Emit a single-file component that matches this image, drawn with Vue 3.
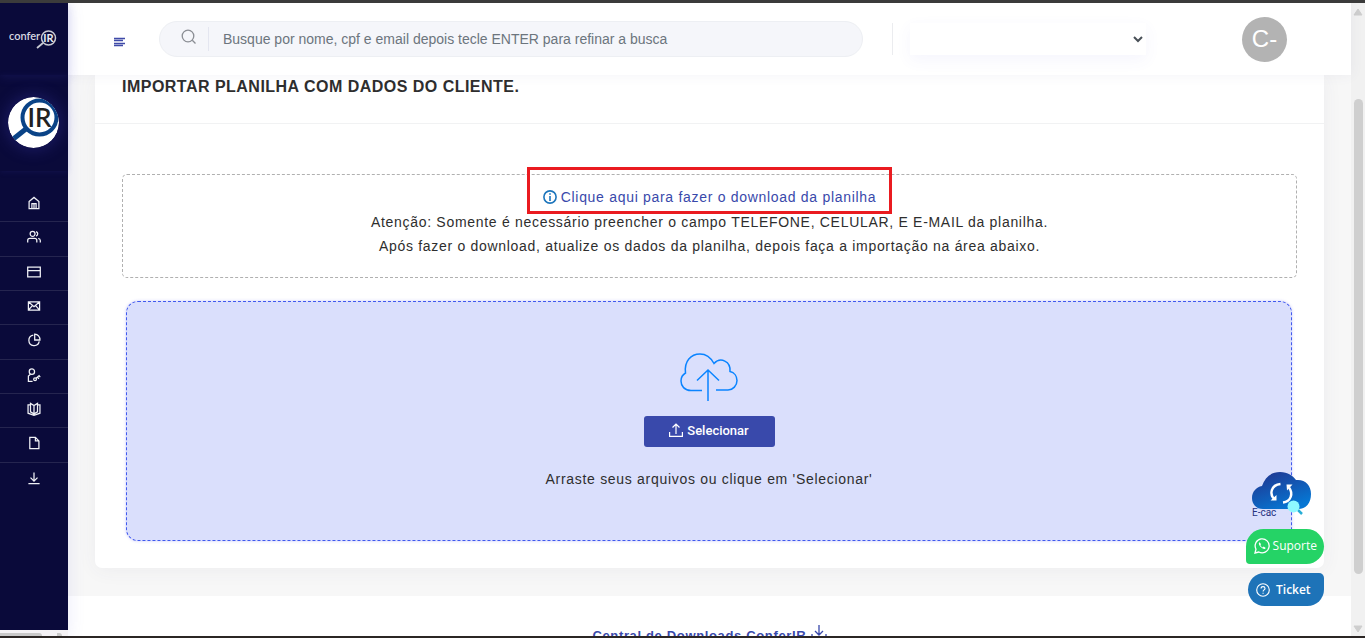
<script setup>
const menu = [
  { label: 'Início', paths: ['M3 8 10 2l7 6v10H3z', 'M7 18v-7h6v7M10 11v7'] },
  { label: 'Clientes', paths: ['M8 9a3.500 3.500 0 1 0 0-7 3.500 3.500 0 0 0 0 7z', 'M1 18v-3q0-3 3-3h7q3 0 3 3v3M13 2.200a3.500 3.500 0 0 1 0 6.600M16 12q3 .5 3 3v3'] },
  { label: 'Pagamentos', paths: ['M1 3h18v14H1zM1 8h18'] },
  { label: 'E-mails', paths: ['M2 4h16v12H2zM2 4l8 7 8-7M2 16l6-7M18 16l-6-7'] },
  { label: 'Relatórios', paths: ['M9 3a7.500 7.500 0 1 0 8.500 9', 'M11 1.500V10h7.500A8 8 0 0 0 11 1.500z'] },
  { label: 'Acessos', paths: ['M7 9a3.800 3.800 0 1 0 0-7.600A3.800 3.800 0 0 0 7 9z', 'M5 9 2 11.500V19h6M11.500 18a2 2 0 1 0 0-4 2 2 0 0 0 0 4zM13 14.500l5-4M15 13l2 2.500M17 11l2 2'] },
  { label: 'Manual', paths: ['M5 2v12l5 3 5-3V2l-5 3zM5 4H1.500v12l8.500 3 8.500-3V4H15M10 5v12'] },
  { label: 'Documentos', paths: ['M4 2h8l5 5v11H4zM12 2v5h5'] },
  { label: 'Downloads', paths: ['M10 2v12M5 9.500l5 5 5-5M2 18h16'] }
]
</script>

<template>
  <div class="page">
    <div class="side-column">
      <aside class="sidebar">
        <a class="brand" href="#" aria-label="conferIR">
          <svg viewBox="0 0 48 20" width="48" height="20">
            <text x="0" y="11" class="brand-name">confer</text>
            <circle cx="39.500" cy="9" r="7" fill="none" stroke="#c9cbd3" stroke-width="1.500" />
            <path d="m34 14-6 5" stroke="#c9cbd3" stroke-width="1.800" />
            <text x="39.500" y="13" text-anchor="middle" class="brand-ir">IR</text>
          </svg>
        </a>
        <div class="company">
          <svg class="badge" viewBox="0 0 51 51" width="51" height="51">
            <defs><clipPath id="badge-clip"><circle cx="25.500" cy="25.500" r="25.500" /></clipPath></defs>
            <g clip-path="url(#badge-clip)">
              <rect width="51" height="51" fill="#fff" />
              <circle cx="31.500" cy="20.500" r="17" fill="#fff" stroke="#0a4387" stroke-width="4" />
              <path d="M18.500 31.500 4 43" stroke="#0a4387" stroke-width="5" />
              <text x="31.500" y="30" text-anchor="middle" class="badge-ir">IR</text>
            </g>
          </svg>
        </div>
        <nav class="menu">
          <a v-for="item in menu" :key="item.label" href="#" :aria-label="item.label">
            <svg viewBox="0 0 20 20" width="14" height="14">
              <path v-for="d in item.paths" :key="d" :d="d" />
            </svg>
          </a>
        </nav>
      </aside>
      <div class="hscroll"><span class="hthumb"></span><span class="harrow"></span></div>
    </div>

    <div class="main">
      <header class="topbar">
        <button class="burger" type="button" aria-label="Menu">
          <svg viewBox="0 0 12 10" width="12" height="10"><path d="M0 1.500h11M0 3.500h9M0 6.500h11M0 8.500h9" stroke="#3f4aa8" stroke-width="1.300" /></svg>
        </button>
        <label class="search">
          <span class="search-icon">
            <svg viewBox="0 0 16 16" width="16" height="16" fill="none" stroke="#8b8e94" stroke-width="1.300"><circle cx="7" cy="7" r="5.800" /><path d="m11.300 11.300 3.200 3.200" /></svg>
          </span>
          <input type="text" aria-label="Busca" placeholder="Busque por nome, cpf e email depois tecle ENTER para refinar a busca">
        </label>
        <span class="rule"></span>
        <select class="picker" aria-label="Empresa"><option></option></select>
        <button class="avatar" type="button">C-</button>
      </header>

      <main class="content">
        <section class="card">
          <h1>IMPORTAR PLANILHA COM DADOS DO CLIENTE.</h1>
          <div class="card-body">
            <div class="notice">
              <a class="download" href="#">
                <svg viewBox="0 0 14 14" width="14" height="14" fill="none" stroke="#1c75bc" stroke-width="1.600"><circle cx="7" cy="7" r="6.100" /><path d="M7 6v5M7 3.200v1.600" /></svg>
                <span>Clique aqui para fazer o download da planilha</span>
              </a>
              <p>Atenção: Somente é necessário preencher o campo TELEFONE, CELULAR, E E-MAIL da planilha.</p>
              <p>Após fazer o download, atualize os dados da planilha, depois faça a importação na área abaixo.</p>
            </div>
            <div class="dropzone">
              <svg class="cloud" viewBox="0 0 58 50" width="58" height="50" fill="none" stroke="#0a84ff" stroke-width="1.500">
                <path d="M22 38.500H11C4.500 38.500 1 34 1 29c0-4 2-6.500 4.500-8C4 9 11 2 20 2c7 0 11 4 14 9.500 6.500-7 17-2 16 8 4.500 1 7 5 7 9 0 5-4 9.500-9 9.500H36" />
                <path d="M28 49V18M17 28.500 28 18l11 10.500" />
              </svg>
              <button class="select-file" type="button">
                <svg viewBox="0 0 14 14" width="14" height="14" fill="none" stroke="#fff" stroke-width="1.200"><path d="M7 11V1M3.500 4.500 7 1l3.500 3.500M.6 9v4.400h12.800V9" /></svg>
                <span>Selecionar</span>
              </button>
              <p>Arraste seus arquivos ou clique em 'Selecionar'</p>
            </div>
          </div>
        </section>
      </main>

      <footer>
        <a href="#">Central de Downloads ConferIR
          <svg viewBox="0 0 16 16" width="16" height="16" fill="none" stroke="#3949ab" stroke-width="1.300"><path d="M8 1v10M4 7l4 4 4-4M1 10v4h14v-4" /></svg>
        </a>
      </footer>
    </div>

    <div class="vscroll">
      <svg viewBox="0 0 10 8" width="10" height="8"><path d="M5 1 9 7H1z" fill="#cecece" stroke="#cecece" stroke-linejoin="round" /></svg>
      <div class="track"><span class="thumb"></span></div>
      <svg viewBox="0 0 10 8" width="10" height="8"><path d="M5 7 9 1H1z" fill="#cecece" stroke="#cecece" stroke-linejoin="round" /></svg>
    </div>

    <div class="floating">
      <a class="ecac" href="#" aria-label="E-cac">
        <svg viewBox="0 0 60 48" width="60" height="48">
          <defs><linearGradient id="sky" x1="0" y1="0" x2="0.600" y2="1"><stop offset="0" stop-color="#22318b" /><stop offset="1" stop-color="#0676d3" /></linearGradient></defs>
          <path d="M11 37C4 37 0 32 0 26c0-6 4-11 10-12C13 5 19 0 28 0c8 0 13 4 16 8 9-1 15 5 15 14 0 9-5 15-13 15z" fill="url(#sky)" />
          <g fill="none" stroke="#fff" stroke-width="2.400"><path d="M28.500 12C19 13 17 22 22.500 27.500" /><path d="M31 30.500c8-1 10.500-9 6-15" /></g>
          <path d="M18.500 28.500h6V23zM34.500 12.500h6l-5.500 6z" fill="#fff" />
          <path d="m45 37 5 5" stroke="#28aed6" stroke-width="2.500" />
          <circle cx="41.500" cy="34.500" r="6" fill="#8ff8ff" />
          <text x="0" y="44" class="ecac-text">E-cac</text>
        </svg>
      </a>
      <a class="support" href="#">
        <svg viewBox="0 0 16 16" width="16" height="16" fill="none" stroke="#fff" stroke-width="1.300"><path d="M1 15l1-3.800a7 7 0 1 1 2.800 2.800z" /><path d="M5.600 4.300 4.900 5c-.7 2.200 3.700 6.600 6 5.900l.8-1-2-1.300-1 1C7.500 9 6.700 8.200 6.300 7.100l.8-.9z" fill="#fff" stroke="none" /></svg>
        <span>Suporte</span>
      </a>
      <a class="ticket" href="#">
        <svg viewBox="0 0 16 16" width="14" height="14" fill="none" stroke="#fff" stroke-width="1.300"><circle cx="8" cy="8" r="7.200" /><path d="M5.800 6.400c0-3 4.500-2.800 4.500-.2 0 1.600-2.200 1.700-2.200 3.400M8.100 11v1.300" /></svg>
        <span>Ticket</span>
      </a>
    </div>
  </div>
</template>

<style>
body {
  margin: 0;
  overflow: hidden;
}
</style>

<style scoped>
* {
  box-sizing: border-box;
}
.page {
  position: relative;
  display: flex;
  height: 100vh;
  overflow: hidden;
  border-top: 3px solid #3b3b3b;
  border-bottom: 2px solid #2b2624;
  background: #fff;
  font-family: "Liberation Sans", Arial, sans-serif;
  font-size: 14px;
  color: #2e2e2e;
}
a {
  text-decoration: none;
}
button {
  border: 0;
  padding: 0;
  font: inherit;
}
p {
  margin: 0;
}

.side-column {
  z-index: 3;
  display: flex;
  flex: 0 0 68px;
  flex-direction: column;
  box-shadow: 0 0 16px rgba(90, 90, 220, 0.13);
}
.sidebar {
  flex: 1;
  min-height: 0;
  background: #0a0a3a;
}
.brand {
  display: flex;
  align-items: center;
  justify-content: center;
  height: 72px;
  padding-right: 3px;
  box-shadow: 0 2px 10px rgba(60, 60, 180, 0.18);
}
.brand-name {
  font: 600 11px Lato, sans-serif;
  fill: #d6d8e0;
}
.brand-ir {
  font: 700 11px Lato, sans-serif;
  fill: #eceef3;
}
.company {
  display: flex;
  align-items: center;
  justify-content: center;
  height: 96px;
  padding: 0 2px 2px 0;
  box-shadow: 0 1px 6px rgba(60, 60, 180, 0.15);
}
.badge {
  border-radius: 50%;
  box-shadow: 0 0 18px rgba(80, 80, 240, 0.3);
}
.badge-ir {
  font: 600 26px Lato, sans-serif;
  fill: #222;
}
.menu {
  display: grid;
  grid-template-rows: repeat(9, 1fr);
  height: 309px;
  margin-top: 17px;
}
.menu a {
  display: flex;
  align-items: center;
  justify-content: center;
  padding: 0 1px 3px 0;
  border-bottom: 1px solid #25254f;
}
.menu a:last-child {
  border-bottom: 0;
}
.menu svg {
  fill: none;
  stroke: #f0f1f6;
  stroke-width: 1.8;
}
.hscroll {
  display: flex;
  flex: 0 0 6px;
  align-items: flex-end;
  justify-content: space-between;
  padding-right: 6px;
  background: #f4f2f5;
}
.hthumb {
  width: 42px;
  height: 3px;
  border-radius: 0 3px 0 0;
  background: #c9c9c9;
}
.harrow {
  width: 5px;
  height: 3px;
  border-radius: 0 3px 0 0;
  background: #c9c9c9;
}

.main {
  display: flex;
  flex: 1;
  flex-direction: column;
  min-width: 0;
  background: #f7f7f7;
}
.topbar {
  z-index: 2;
  display: flex;
  flex: 0 0 72px;
  align-items: center;
  padding: 0 64px 0 46px;
  background: #fff;
  box-shadow: 0 0 12px rgba(80, 80, 140, 0.07);
}
.burger {
  display: flex;
  width: 12px;
  margin: 6px 33px 0 0;
  background: none;
}
.search {
  display: flex;
  flex: 0 0 60%;
  align-items: center;
  height: 36px;
  border: 1px solid #edeff3;
  border-radius: 18px;
  background: #f5f6fa;
}
.search-icon {
  display: flex;
  justify-content: flex-end;
  width: 49px;
  height: 24px;
  padding: 2px 11px 0 0;
  border-right: 1px solid #e4e6f0;
}
.search input {
  flex: 1;
  min-width: 0;
  padding: 0 14px;
  border: 0;
  outline: 0;
  background: none;
  font: inherit;
  color: #6c757d;
}
.search input::placeholder {
  color: #6c757d;
}
.rule {
  width: 1px;
  height: 32px;
  margin: 0 17px 0 29px;
  background: #ebecef;
}
.picker {
  width: 236px;
  height: 32px;
  border: 0;
  background: #fff;
  box-shadow: 0 5px 16px rgba(90, 90, 220, 0.06);
  font: inherit;
  color: #495057;
}
.avatar {
  width: 45px;
  height: 45px;
  margin-left: auto;
  border-radius: 50%;
  background: #b3b3b3;
  color: #fff;
  font-size: 24px;
}

.content {
  padding: 0 27px 28px;
}
.card {
  border-radius: 0 0 7px 7px;
  background: #fff;
  box-shadow: 0 2px 20px rgba(60, 60, 100, 0.06);
}
h1 {
  height: 49px;
  margin: 0;
  padding: 0 27px;
  border-bottom: 1px solid #f1f2f3;
  font-size: 16px;
  line-height: 24px;
  letter-spacing: 0.03em;
}
.card-body {
  padding: 50px 27px 27px;
}
.notice {
  display: flex;
  flex-direction: column;
  align-items: center;
  padding: 10px 0 19px;
  border: 1px dashed #b0b0b0;
  border-radius: 5px;
  letter-spacing: 0.05em;
  line-height: 24px;
}
.download {
  position: relative;
  display: flex;
  align-items: center;
  gap: 4px;
  padding-bottom: 1px;
  color: #3949ab;
}
.download::after {
  position: absolute;
  inset: -18px -16px -4px;
  border: 3px solid #ea1b20;
  content: "";
}
.dropzone {
  display: flex;
  flex-direction: column;
  align-items: center;
  margin: 23px 5px 0 4px;
  padding: 50px 0 49px;
  border: 1px dashed #4059ee;
  border-radius: 12px;
  background: #dadffc;
  box-shadow: 0 0 3px rgba(80, 80, 240, 0.3);
  letter-spacing: 0.05em;
  line-height: 24px;
}
.select-file {
  display: flex;
  align-items: center;
  justify-content: center;
  gap: 4px;
  width: 131px;
  height: 31px;
  margin: 14px 0 20px;
  padding-bottom: 3px;
  border-radius: 3px;
  background: #3949ab;
  color: #fff;
  font: 500 13px Roboto, sans-serif;
}

footer {
  flex: 1;
  padding-top: 28px;
  background: #fff;
  text-align: center;
}
footer a {
  color: #3949ab;
  font-size: 13px;
  font-weight: 700;
  letter-spacing: 0.05em;
}

.vscroll {
  display: flex;
  flex: 0 0 14px;
  flex-direction: column;
  align-items: center;
  padding: 5px 0 3px;
  background: #f1f1f1;
}
.track {
  display: flex;
  flex: 1;
  flex-direction: column;
}
.track::before {
  flex: 83;
  content: "";
}
.track::after {
  flex: 51;
  content: "";
}
.thumb {
  flex: 475;
  width: 9px;
  border-radius: 5px;
  background: #cfcfcf;
}

.floating {
  position: absolute;
  z-index: 4;
  right: 41px;
  bottom: 30px;
  display: flex;
  flex-direction: column;
  align-items: flex-end;
}
.floating a {
  display: flex;
  align-items: center;
  color: #fff;
}
.ecac {
  margin: 0 12px 9px 0;
}
.ecac-text {
  font: 10px Roboto, sans-serif;
  fill: #26327f;
}
.support {
  gap: 3px;
  height: 35px;
  margin-bottom: 9px;
  padding: 0 7px 2px 8px;
  border-radius: 18px 18px 18px 4px;
  background: #25d366;
  font: 12px "Open Sans", sans-serif;
}
.ticket {
  gap: 6px;
  width: 76px;
  height: 33px;
  padding-left: 8px;
  border-radius: 17px 5px 17px 17px;
  background: #1e73b8;
  font: 600 12px "Open Sans", sans-serif;
}
</style>
